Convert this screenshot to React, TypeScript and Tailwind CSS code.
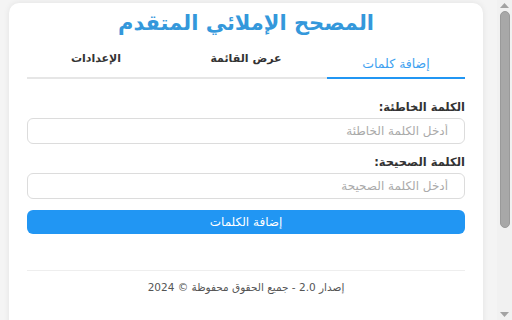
export default function App() {
  const font = { fontFamily: '"DejaVu Sans", sans-serif' };
  return (
    <div className="h-[320px] flex overflow-hidden bg-[#f4f4f4]" style={font}>
      <div className="flex-1 min-w-0">
        <div dir="rtl" className="min-h-[442px] pt-[3px] pb-[9px] pl-[9px] pr-[14px]">
          <div className="bg-white rounded-[10px] shadow-[0_0_6px_rgba(0,0,0,0.08)] px-[18px] pt-[7px] pb-[20px] min-h-[430px]">
            <h1 className="text-center text-[#3498db] text-[21px] font-bold leading-[26px]">
              المصحح الإملائي المتقدم
            </h1>
            <div className="mt-[10px] flex gap-[12px] border-b-2 border-[#e6e6e6]">
              <button className="flex-1 -mb-[2px] border-b-2 border-[#2196f3] text-[#3ea1f0] text-[12.5px] pt-[11px] pb-[6px] leading-[14px]" style={font}>
                إضافة كلمات
              </button>
              <button className="flex-1 text-[#333] text-[11px] font-bold pt-[6px] pb-[11px] leading-[14px]" style={font}>
                عرض القائمة
              </button>
              <button className="flex-1 text-[#333] text-[11px] font-bold pt-[6px] pb-[11px] leading-[14px]" style={font}>
                الإعدادات
              </button>
            </div>
            <div className="mt-[21px] flex flex-col">
              <label className="text-[11.5px] font-bold text-[#333] leading-[14px]">الكلمة الخاطئة:</label>
              <input
                className="mt-[4px] h-[26px] border border-[#dcdcdc] rounded-[6px] pr-[16px] pl-[10px] text-[12px] placeholder:text-[#aaa] outline-none"
                placeholder="أدخل الكلمة الخاطئة"
                style={font}
              />
              <label className="mt-[11px] text-[11.5px] font-bold text-[#333] leading-[14px]">الكلمة الصحيحة:</label>
              <input
                className="mt-[4px] h-[26px] border border-[#dcdcdc] rounded-[6px] pr-[16px] pl-[10px] text-[12px] placeholder:text-[#aaa] outline-none"
                placeholder="أدخل الكلمة الصحيحة"
                style={font}
              />
              <button className="mt-[11px] h-[24px] bg-[#2196f3] rounded-[6px] text-white text-[12px] leading-[14px]" style={font}>
                إضافة الكلمات
              </button>
            </div>
            <div className="mt-[36px] border-t border-[#eeeeee] pt-[9px] text-center text-[10.5px] text-[#555] leading-[14px]">
              إصدار 2.0 - جميع الحقوق محفوظة © 2024
            </div>
          </div>
        </div>
      </div>
      <div className="w-[15px] shrink-0 bg-[#f1f1f1] flex flex-col items-center">
        <div className="h-[10px] flex items-center justify-center">
          <svg width="9" height="5" viewBox="0 0 9 5"><path d="M0 5 L4.5 0 L9 5 Z" fill="#a3a3a3" /></svg>
        </div>
        <div className="mt-[1px] w-[10px] h-[217px] rounded-[5px] bg-[#a8a8a8] border border-[#9a9a9a]" />
        <div className="flex-1" />
        <div className="h-[12px] flex items-center justify-center">
          <svg width="9" height="5" viewBox="0 0 9 5"><path d="M0 0 L4.5 5 L9 0 Z" fill="#a3a3a3" /></svg>
        </div>
      </div>
    </div>
  );
}
